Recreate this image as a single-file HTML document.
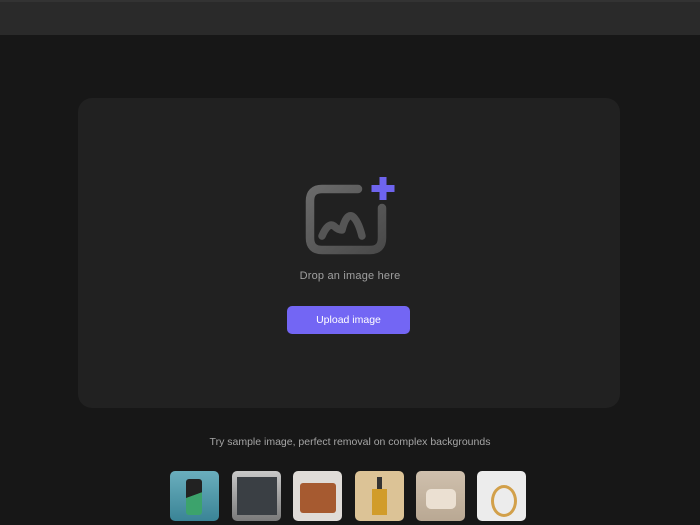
<!DOCTYPE html>
<html><head><style>
body{margin:0;width:700px;height:525px;background:#171717;font-family:"Liberation Sans",sans-serif;overflow:hidden;position:relative}
.hdr{position:absolute;left:0;top:0;width:700px;height:35px;background:#2a2a2a;border-top:2px solid #333;box-sizing:border-box}
.card{position:absolute;left:78px;top:98px;width:542px;height:310px;background:#212121;border-radius:14px}
.drop{position:absolute;left:0;width:700px;top:270px;text-align:center;color:#a0a0a0;font-size:11px;letter-spacing:0.2px}
.btn{position:absolute;left:287px;top:306px;width:123px;height:28px;background:#7366f4;border-radius:5px;color:#fff;font-size:10.5px;text-align:center;line-height:28px}
.try{position:absolute;left:0;width:700px;top:436px;text-align:center;color:#a5a5a5;font-size:10.5px}
.t{position:absolute;top:471px;width:49px;height:50px;border-radius:5px}
</style></head><body>
<div class="hdr"></div>
<div class="card"></div>
<svg style="position:absolute;left:300px;top:174px" width="100" height="90" viewBox="0 0 100 90">
<defs><linearGradient id="g" x1="0" y1="0" x2="1" y2="1"><stop offset="0" stop-color="#6a6a6a"/><stop offset="1" stop-color="#4a4a4a"/></linearGradient></defs>
<path d="M58 15 H22 Q10 15 10 27 V64 Q10 76 22 76 H70 Q82 76 82 64 V34" fill="none" stroke="url(#g)" stroke-width="8.5" stroke-linecap="round"/>
<path d="M22 62 Q28 48 34 52 Q38 56 42 56 Q46 40 52 42 Q58 46 62 62" fill="none" stroke="#555" stroke-width="7.5" stroke-linecap="round" stroke-linejoin="round"/>
<path d="M83 3 V26 M71.5 14.5 H94.5" stroke="#6e64ee" stroke-width="7"/>
</svg>
<div class="drop">Drop an image here</div>
<div class="btn">Upload image</div>
<div class="try">Try sample image, perfect removal on complex backgrounds</div>
<div class="t" style="left:170px;background:linear-gradient(180deg,#6aaebd,#3a8496)"><div style="position:absolute;left:16px;top:8px;width:16px;height:36px;border-radius:3px;background:linear-gradient(160deg,#222 45%,#3ca36c 46%)"></div></div>
<div class="t" style="left:232px;background:linear-gradient(180deg,#c8c8c8,#7a7a7a)"><div style="position:absolute;left:5px;top:6px;width:40px;height:38px;background:#3a3f44"></div></div>
<div class="t" style="left:293px;background:#e0dcd8"><div style="position:absolute;left:7px;top:12px;width:36px;height:30px;background:#a65a30;border-radius:3px"></div></div>
<div class="t" style="left:355px;background:#dcc396"><div style="position:absolute;left:17px;top:18px;width:15px;height:26px;background:#d19c2a"></div><div style="position:absolute;left:22px;top:6px;width:5px;height:12px;background:#333"></div></div>
<div class="t" style="left:416px;background:linear-gradient(180deg,#cfc0ad,#b9a893)"><div style="position:absolute;left:10px;top:18px;width:30px;height:20px;background:#ebe0d2;border-radius:5px"></div></div>
<div class="t" style="left:477px;background:#ececec"><div style="position:absolute;left:14px;top:14px;width:20px;height:26px;border:3px solid #d2a04a;border-radius:50%"></div></div>
</body></html>
